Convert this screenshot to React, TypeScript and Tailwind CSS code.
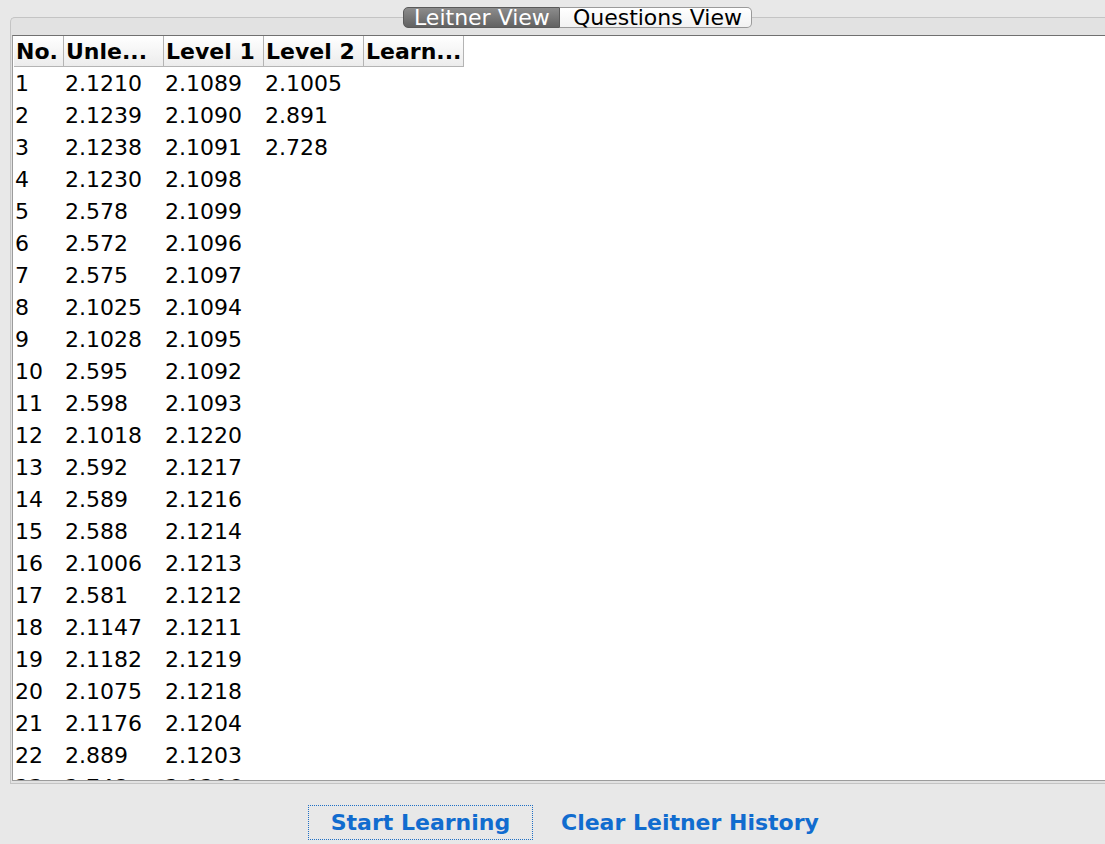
const rows: [string, string, string, string][] = [
  ["1", "2.1210", "2.1089", "2.1005"],
  ["2", "2.1239", "2.1090", "2.891"],
  ["3", "2.1238", "2.1091", "2.728"],
  ["4", "2.1230", "2.1098", ""],
  ["5", "2.578", "2.1099", ""],
  ["6", "2.572", "2.1096", ""],
  ["7", "2.575", "2.1097", ""],
  ["8", "2.1025", "2.1094", ""],
  ["9", "2.1028", "2.1095", ""],
  ["10", "2.595", "2.1092", ""],
  ["11", "2.598", "2.1093", ""],
  ["12", "2.1018", "2.1220", ""],
  ["13", "2.592", "2.1217", ""],
  ["14", "2.589", "2.1216", ""],
  ["15", "2.588", "2.1214", ""],
  ["16", "2.1006", "2.1213", ""],
  ["17", "2.581", "2.1212", ""],
  ["18", "2.1147", "2.1211", ""],
  ["19", "2.1182", "2.1219", ""],
  ["20", "2.1075", "2.1218", ""],
  ["21", "2.1176", "2.1204", ""],
  ["22", "2.889", "2.1203", ""],
  ["23", "2.748", "2.1206", ""],
];

const headers = ["No.", "Unle...", "Level 1", "Level 2", "Learn..."];
const widths = ["w-[50px]", "w-[100px]", "w-[100px]", "w-[100px]", "w-[100px]"];

export default function App() {
  return (
    <div className="w-[1105px] h-[844px] overflow-hidden bg-[#e8e8e8] font-['DejaVu_Sans',sans-serif] text-black">
      {/* Tabbed pane */}
      <div className="relative ml-[10px] mt-[17px] w-[1110px] h-[767px] rounded-tl-[5px] border-t border-l border-b border-[#c4c4c4] bg-[#e2e2e2] pt-[17px]">
        {/* Tabs */}
        <div className="absolute left-[392px] top-[-11px] flex h-[21px] text-[22px] leading-[20px]">
          <div className="flex items-center rounded-l-[5px] border border-[#5a5a5a] bg-gradient-to-b from-[#8c8c8c] to-[#626262] pl-[10px] pr-[9px] text-white">
            Leitner View
          </div>
          <div className="flex items-center rounded-r-[5px] border border-l-0 border-[#9a9a9a] bg-gradient-to-b from-white to-[#f2f2f2] pl-[13px] pr-[9px]">
            Questions View
          </div>
        </div>

        {/* Scroll pane */}
        <div className="ml-px h-[746px] overflow-hidden border-t border-l border-b border-t-[#707070] border-l-[#9c9c9c] border-b-[#9c9c9c] bg-white pl-px">
          <div className="flex h-[31px] w-fit border-b border-[#b4b4b4] bg-gradient-to-b from-white to-[#ececec]">
            {headers.map((h, i) => (
              <div
                key={h}
                className={`${widths[i]} flex items-center border-r border-[#b4b4b4] pl-[2px] pt-[2px] text-[22px] font-bold leading-none`}
              >
                {h}
              </div>
            ))}
          </div>
          {rows.map((r) => (
            <div key={r[0]} className="flex h-[32px] items-center pt-px text-[22px] leading-none">
              {r.map((c, i) => (
                <div key={i} className={`${widths[i]} pl-[1px] whitespace-nowrap`}>
                  {c}
                </div>
              ))}
            </div>
          ))}
        </div>
      </div>

      {/* Buttons */}
      <div className="mt-[21px] flex items-center pl-[308px] text-[22px] font-bold text-[#116ccf]">
        <button className="h-[35px] w-[225px] border border-dotted border-[#1f6fc4] leading-none">
          Start Learning
        </button>
        <button className="ml-[28px] h-[35px] leading-none">Clear Leitner History</button>
      </div>
    </div>
  );
}
